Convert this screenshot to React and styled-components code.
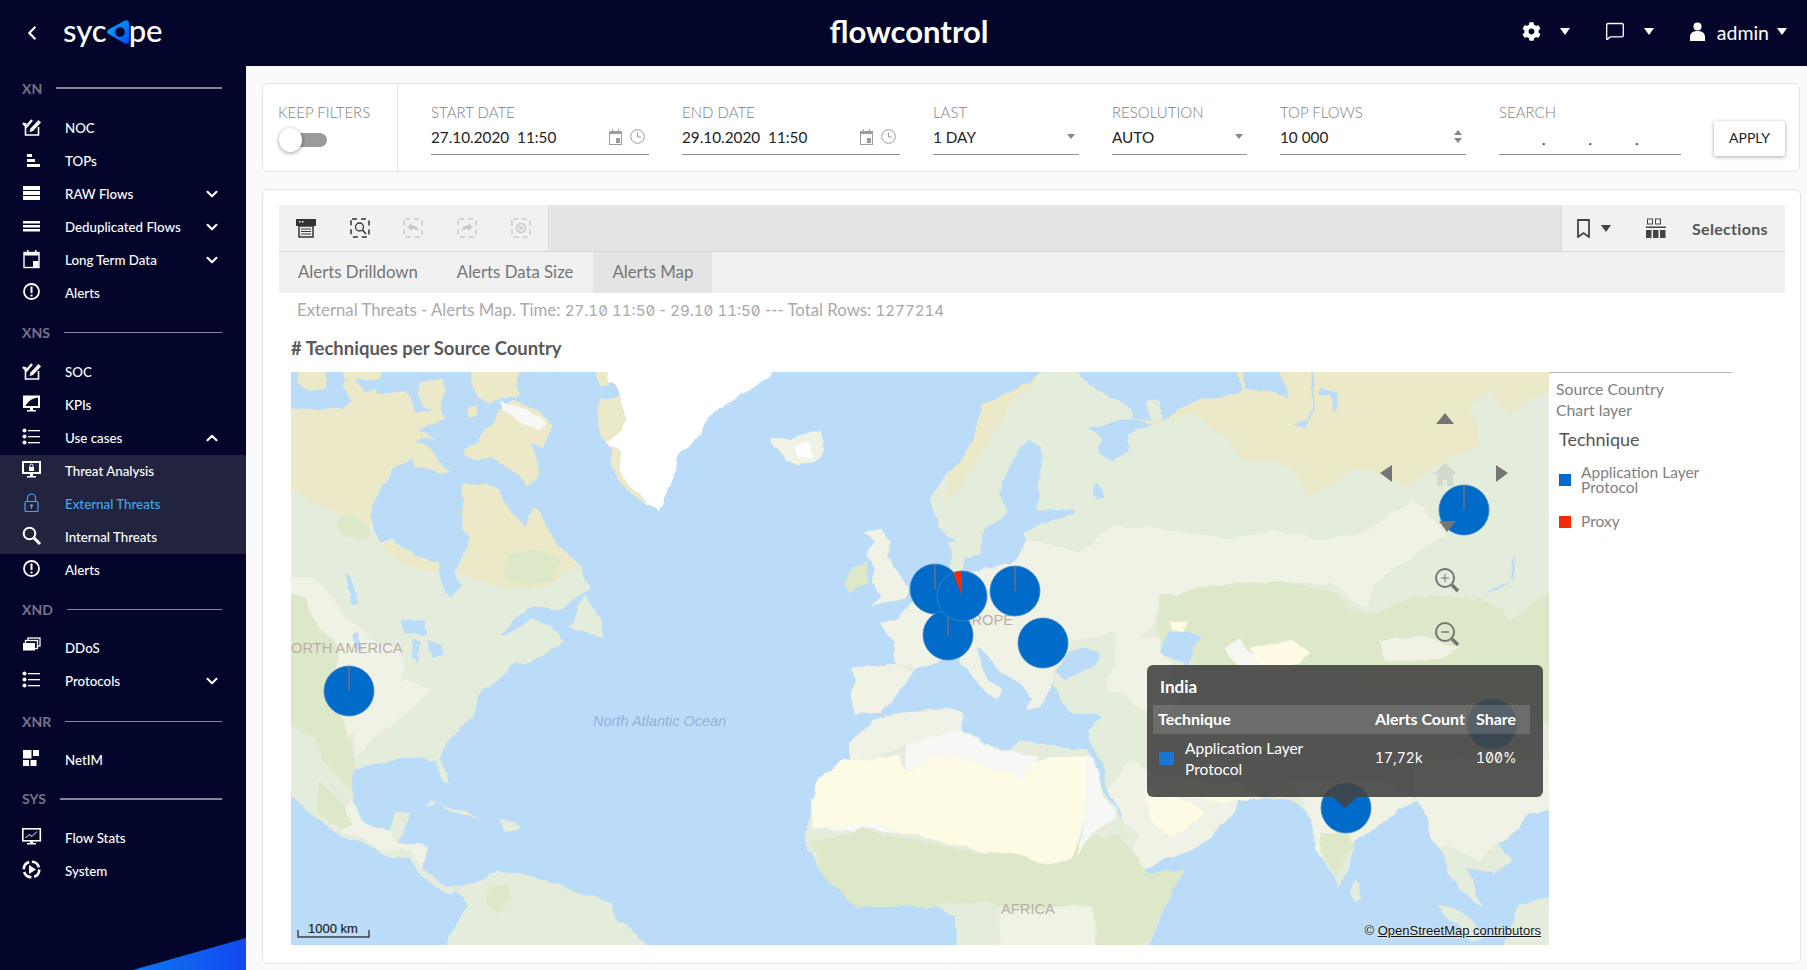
import React from 'react';
import styled, { createGlobalStyle } from 'styled-components';
import { FaCog } from 'react-icons/fa';
import { MessageSquare, ChevronDown, ChevronUp, ChevronLeft } from 'lucide-react';

const GlobalStyle = createGlobalStyle`
  html, body { margin: 0; padding: 0; background: #fafafa; }
  * { box-sizing: border-box; }
  body { font-family: Lato, "Open Sans", sans-serif; }
`;

const navy = '#03062a';

const icons = {
  noc: (
    <>
      <path d="M3.5 6v12h13V10" fill="none" stroke="currentColor" strokeWidth="1.6" />
      <path d="M1 6l3.5 3.5L10 3" fill="none" stroke="currentColor" strokeWidth="2.4" />
      <path d="M7.5 15l1-3.5 8-8.5 2.5 2.5-8 8.500z" fill="currentColor" />
    </>
  ),
  tops: (
    <>
      <rect x="5" y="4" width="5" height="3" fill="currentColor" />
      <rect x="5" y="9" width="8" height="3" fill="currentColor" />
      <rect x="5" y="14" width="13" height="3" fill="currentColor" />
    </>
  ),
  raw: (
    <>
      <rect x="1" y="3" width="17" height="4" fill="currentColor" />
      <rect x="1" y="8" width="17" height="4" fill="currentColor" />
      <rect x="1" y="13" width="17" height="4" fill="currentColor" />
    </>
  ),
  dedup: (
    <>
      <rect x="1" y="5" width="17" height="2.500" fill="currentColor" />
      <rect x="1" y="9" width="17" height="2.500" fill="currentColor" />
      <rect x="1" y="13" width="17" height="2.500" fill="currentColor" />
    </>
  ),
  calendar: (
    <>
      <rect x="2" y="3.500" width="15" height="15" fill="none" stroke="currentColor" strokeWidth="1.4" />
      <rect x="2" y="3.500" width="15" height="3" fill="currentColor" />
      <rect x="5" y="1" width="1.500" height="3" fill="currentColor" />
      <rect x="13" y="1" width="1.500" height="3" fill="currentColor" />
      <rect x="11" y="12" width="5.500" height="6" fill="currentColor" />
    </>
  ),
  alert: (
    <>
      <circle cx="9.500" cy="9.500" r="7.500" fill="none" stroke="currentColor" strokeWidth="1.800" />
      <rect x="8.500" y="4.500" width="2" height="6.500" fill="currentColor" />
      <rect x="8.500" y="12.500" width="2" height="2" fill="currentColor" />
    </>
  ),
  kpi: (
    <>
      <rect x="1" y="1.500" width="17" height="12.500" fill="currentColor" />
      <path d="M3.500 12 C6 7 10 4.500 16 3.500 V12z" fill={navy} />
      <rect x="8" y="14" width="3" height="2" fill="currentColor" />
      <rect x="5" y="16" width="9" height="1.500" fill="currentColor" />
    </>
  ),
  list: (
    <>
      <circle cx="2.500" cy="3.500" r="2" fill="currentColor" />
      <circle cx="2.500" cy="9.500" r="2" fill="currentColor" />
      <circle cx="2.500" cy="15.500" r="2" fill="currentColor" />
      <rect x="6" y="3" width="12" height="1.300" fill="currentColor" />
      <rect x="6" y="9" width="12" height="1.300" fill="currentColor" />
      <rect x="6" y="15" width="12" height="1.300" fill="currentColor" />
    </>
  ),
  threat: (
    <>
      <rect x="0" y="1" width="19" height="13" fill="currentColor" />
      <rect x="2" y="3" width="15" height="9" fill="#22243f" />
      <rect x="7" y="7" width="5" height="4" fill="currentColor" />
      <path d="M8 7V5.500a1.500 1.500 0 0 1 3 0V7" fill="none" stroke="currentColor" />
      <rect x="8" y="14" width="3" height="2" fill="currentColor" />
      <rect x="5" y="16" width="9" height="1.500" fill="currentColor" />
    </>
  ),
  lock: (
    <>
      <rect x="3" y="8.500" width="13" height="10" rx="1" fill="none" stroke="currentColor" strokeWidth="1.200" />
      <path d="M5.500 8.500V5a4 4 0 0 1 8 0v3.500" fill="none" stroke="currentColor" strokeWidth="1.200" />
      <circle cx="9.500" cy="12.500" r="1.500" fill="currentColor" />
      <rect x="9" y="13" width="1" height="3" fill="currentColor" />
    </>
  ),
  search: (
    <>
      <circle cx="7.500" cy="7.500" r="5.800" fill="none" stroke="currentColor" strokeWidth="2" />
      <path d="M12 12l6 6" stroke="currentColor" strokeWidth="3" />
    </>
  ),
  ddos: (
    <>
      <rect x="6" y="1" width="12" height="8" fill={navy} stroke="currentColor" strokeWidth="1.300" />
      <rect x="3.500" y="3.500" width="12" height="8" fill={navy} stroke="currentColor" strokeWidth="1.300" />
      <rect x="1" y="6" width="12" height="7.500" fill="currentColor" />
    </>
  ),
  netim: (
    <>
      <rect x="1" y="1" width="8.500" height="8.500" fill="currentColor" />
      <rect x="11" y="1" width="6" height="6" fill="currentColor" />
      <rect x="1" y="11" width="6" height="6" fill="currentColor" />
      <rect x="8.500" y="11" width="6" height="6" fill="currentColor" />
    </>
  ),
  stats: (
    <>
      <rect x="0.800" y="1.800" width="17.500" height="12" fill="none" stroke="currentColor" strokeWidth="1.600" />
      <path d="M3.500 11l3.500-3.500 3 2 5-5" fill="none" stroke="currentColor" strokeWidth="1" />
      <rect x="8" y="14" width="3" height="2" fill="currentColor" />
      <rect x="5" y="16" width="9" height="1.500" fill="currentColor" />
    </>
  ),
  system: (
    <>
      <circle cx="9.500" cy="9.500" r="7.800" fill="none" stroke="currentColor" strokeWidth="2.600" strokeDasharray="9.500 2.800" />
      <path d="M7 5l7 4.500-7 4.500z" fill="currentColor" />
    </>
  ),
};

const sections = [
  {
    label: 'XN',
    thick: true,
    top: 0,
    bottom: 11.5,
    items: [
      { icon: 'noc', label: 'NOC' },
      { icon: 'tops', label: 'TOPs' },
      { icon: 'raw', label: 'RAW Flows', arrow: 'down' },
      { icon: 'dedup', label: 'Deduplicated Flows', arrow: 'down' },
      { icon: 'calendar', label: 'Long Term Data', arrow: 'down' },
      { icon: 'alert', label: 'Alerts' },
    ],
  },
  {
    label: 'XNS',
    top: 10.5,
    bottom: 11.5,
    items: [
      { icon: 'noc', label: 'SOC' },
      { icon: 'kpi', label: 'KPIs' },
      { icon: 'list', label: 'Use cases', arrow: 'up' },
      { icon: 'threat', label: 'Threat Analysis', sub: true },
      { icon: 'lock', label: 'External Threats', sub: true, active: true },
      { icon: 'search', label: 'Internal Threats', sub: true },
      { icon: 'alert', label: 'Alerts' },
    ],
  },
  {
    label: 'XND',
    top: 10.5,
    bottom: 10.5,
    items: [
      { icon: 'ddos', label: 'DDoS' },
      { icon: 'list', label: 'Protocols', arrow: 'down' },
    ],
  },
  { label: 'XNR', top: 11.5, bottom: 10.5, items: [{ icon: 'netim', label: 'NetIM' }] },
  {
    label: 'SYS',
    thick: true,
    top: 10,
    bottom: 11,
    items: [
      { icon: 'stats', label: 'Flow Stats' },
      { icon: 'system', label: 'System' },
    ],
  },
];

// map shapes are in page pixels, the svg viewBox starts at the map's corner
// edge points run past the map so the rough coast filter leaves no gaps there
const ocean = '#bbdcf8';
const pale = '#f1f2e6';
const light = '#e4ecdc';
const green = '#dde8c8';
const cream = '#ece9c8';
const sand = '#fdfbe4';

const shapes = [
  // north america
  [light, '280,407 317,408 343,410 362,392 385,392 407,393 413,413 443,410 445,420 420,428 430,440 417,437 412,460 395,467 380,483 370,507 370,520 380,540 393,540 413,557 437,562 440,573 452,597 460,583 455,570 470,550 470,537 460,527 465,503 462,485 487,483 500,493 512,513 523,528 537,507 557,547 580,567 588,583 588,593 577,597 563,607 533,607 513,620 503,633 510,633 533,618 547,625 565,642 540,657 513,663 499,680 480,692 472,717 447,743 436,757 445,773 451,788 443,782 433,758 406,755 380,760 355,770 351,793 362,823 390,830 395,814 412,811 403,833 398,842 428,847 423,867 445,883 464,887 445,892 420,873 411,857 390,857 351,840 318,820 280,790'],
  [cream, '280,407 317,408 343,410 362,392 385,392 407,393 413,413 443,410 445,420 420,428 430,440 417,437 412,460 395,467 380,483 370,507 373,530 360,520 337,513 313,500 280,483'],
  [cream, '462,485 487,483 500,493 512,513 523,528 537,507 557,547 575,565 555,580 540,590 520,585 493,587 470,578 457,570 470,550 470,537 460,527 465,503'],
  [green, '340,515 362,522 372,535 362,542 345,535 335,522'],
  [cream, '383,543 393,540 413,557 437,562 438,570 420,570 398,560'],
  [green, '510,555 530,548 560,560 555,578 530,585 505,578'],
  [pale, '280,580 310,578 330,595 350,620 375,640 400,650 405,665 395,700 372,720 345,740 330,700 320,650 300,610 280,600'],
  [green, '280,595 305,595 318,625 340,650 335,700 352,740 355,770 351,793 330,770 315,740 280,720'],
  [pale, '375,690 405,680 430,690 395,725 370,740 355,760 355,735'],
  [pale, '352,800 362,823 390,830 398,842 428,847 423,867 410,850 380,850 350,835 330,825'],
  [green, '318,780 340,800 352,825 340,830 318,815'],
  [light, '568,627 583,597 600,617 605,637 590,633 573,628'],
  // arctic islands
  [cream, '462,450 480,443 485,430 497,413 513,400 540,412 555,427 543,448 530,442 540,470 537,480 528,485 513,470 497,460 480,458 463,458'],
  ['#f7f7f5', '500,403 525,408 540,418 548,426 538,430 520,420 503,412'],
  [cream, '473,362 520,362 518,395 505,400 490,405 478,395 470,385'],
  [cream, '343,385 352,378 365,392 378,385 377,400 362,408 350,400'],
  [cream, '420,382 440,378 445,392 443,410 425,408 418,395'],
  [cream, '300,362 330,362 328,388 310,394 298,385'],
  [cream, '340,362 385,362 382,378 345,380'],
  [cream, '413,440 425,445 440,460 450,470 438,472 425,468 415,470 412,460'],
  [cream, '467,407 478,404 480,415 470,418'],
  // south america
  [light, '464,887 472,883 499,868 538,877 571,890 609,903 620,923 636,937 653,955 447,955 450,937 469,907 455,890'],
  [green, '490,885 510,885 510,900 495,915 488,905'],
  // caribbean
  [light, '425,805 440,802 460,815 480,820 465,812 448,805 430,800'],
  [light, '498,820 515,822 520,830 505,832'],
  // greenland
  ['#ffffff', '593,362 600,385 615,382 620,398 600,410 598,425 605,440 612,450 612,465 620,480 630,495 645,505 655,510 658,512 665,505 668,490 675,470 678,455 688,442 714,412 770,377 775,362'],
  [cream, '600,398 620,398 623,430 610,438 604,440 598,425'],
  [cream, '610,445 620,452 620,470 632,490 648,505 640,503 625,490 612,465'],
  [cream, '593,362 605,362 610,385 600,385'],
  // iceland
  [pale, '770,436 775,436 790,441 805,434 820,432 823,450 813,459 800,466 787,463 780,450 772,445'],
  ['#ffffff', '795,447 808,443 812,455 798,458'],
  // british isles
  [pale, '864,530 882,527 890,540 887,557 897,570 907,587 905,600 887,603 872,608 880,597 872,583 877,570 867,557 874,543'],
  [green, '849,570 867,562 869,583 849,595 845,583'],
  // eurasia
  [light, '938,530 930,500 948,473 976,440 979,407 1010,390 1035,378 1076,362 1080,380 1103,390 1130,410 1133,422 1087,425 1103,437 1100,453 1113,463 1125,450 1130,437 1150,423 1147,402 1160,403 1160,420 1180,408 1203,398 1230,395 1243,392 1240,380 1228,362 1559,362 1559,807 1530,813 1518,830 1500,843 1513,863 1493,877 1467,867 1483,907 1463,890 1453,880 1437,847 1423,813 1417,800 1397,813 1373,830 1353,840 1350,867 1337,888 1320,857 1310,817 1290,800 1260,798 1237,803 1213,840 1173,857 1143,870 1130,850 1119,812 1100,765 1092,750 1086,730 1103,713 1070,715 1059,703 1053,683 1048,690 1040,705 1026,710 1031,697 1005,672 990,660 975,645 982,667 1000,690 995,700 985,690 962,665 960,653 947,657 917,667 912,672 900,690 895,705 880,712 865,712 855,715 852,695 855,680 850,668 895,663 893,643 880,623 900,617 910,607 917,593 937,573 950,570 947,540 963,540 963,573 990,570 1013,560 1027,540 1027,530 1040,525 1072,515 1072,508 1035,510 1040,480 1044,445 1030,440 1020,448 1006,470 1000,495 1010,510 1000,522 985,530 978,555 965,555 955,540'],
  [cream, '948,473 976,440 979,407 1010,390 1035,378 1000,420 985,450 962,480 945,500'],
  [pale, '880,623 900,617 910,607 917,593 937,573 950,570 963,573 990,570 1013,560 1027,540 1080,553 1113,527 1180,530 1223,540 1273,530 1313,540 1363,530 1413,503 1447,530 1413,557 1373,583 1367,610 1327,583 1280,583 1213,587 1157,597 1153,623 1130,657 1113,633 1080,637 1060,650 1053,683 1048,690 1040,705 1026,710 1031,697 1005,672 990,660 975,645 982,667 1000,690 995,700 985,690 962,665 960,653 947,657 917,667 895,663 893,643'],
  [pale, '852,695 855,680 850,668 895,663 912,672 900,690 895,705 880,712 865,712 855,715'],
  [cream, '1133,422 1150,423 1160,420 1180,408 1203,398 1230,395 1243,392 1240,380 1228,362 1559,362 1559,380 1513,413 1487,390 1470,410 1483,447 1447,457 1408,487 1373,470 1353,467 1327,487 1307,497 1293,470 1240,457 1227,437 1193,413'],
  [green, '1157,597 1213,587 1263,580 1327,590 1367,617 1413,597 1480,597 1513,620 1559,583 1559,730 1490,700 1400,690 1330,680 1250,680 1190,660 1157,640'],
  [pale, '1120,640 1157,640 1170,665 1180,700 1160,720 1125,700 1105,690'],
  [sand, '1170,622 1188,620 1184,637 1174,637'],
  ['#f7f7f2', '1225,650 1240,640 1250,655 1280,660 1240,670'],
  [sand, '1250,650 1290,640 1310,655 1300,665 1260,665'],
  [pale, '1380,640 1420,635 1460,645 1440,660 1385,660'],
  [pale, '1130,760 1180,790 1237,803 1213,840 1173,857 1143,870 1130,850 1110,790'],
  [sand, '1145,790 1190,800 1205,815 1170,835 1150,825'],
  [sand, '1160,775 1240,785 1260,798 1237,803 1180,795'],
  [pale, '1290,780 1380,780 1417,800 1373,830 1353,840 1340,860 1320,857 1310,817'],
  [green, '1320,830 1350,830 1352,845 1335,880 1322,855'],
  [pale, '1410,760 1559,760 1559,807 1530,813 1518,830 1500,843 1480,860 1460,850 1437,847 1423,813 1417,800'],
  [light, '1357,880 1363,885 1364,897 1357,900 1352,892'],
  // se asia islands
  [light, '1437,903 1450,905 1470,920 1483,938 1475,940 1455,925'],
  [light, '1520,905 1559,895 1559,955 1500,955 1510,925'],
  // africa
  [light, '850,757 850,743 870,718 911,712 960,710 963,730 1010,753 1020,740 1070,750 1086,750 1092,760 1119,820 1140,833 1130,857 1147,873 1187,870 1173,890 1150,943 1150,955 955,955 955,913 933,907 856,908 823,873 807,850 807,810 820,780 845,757'],
  [green, '808,840 860,830 960,850 1020,855 1060,860 1085,840 1120,835 1147,873 1187,870 1173,890 1150,940 1135,955 1000,955 1005,905 960,900 933,907 856,908 823,873'],
  [pale, '1000,910 1090,905 1100,955 1000,955'],
  [sand, '820,780 845,757 899,755 905,775 938,755 1026,760 1086,758 1086,816 1070,860 1048,863 1021,856 993,853 899,832 812,827 807,810'],
  ['#f7f7f5', '812,827 899,832 993,853 915,835 880,825 840,825'],
  ['#f7f7f5', '905,745 950,725 1000,750 1040,755 1020,780 985,765 938,755 905,775'],
  ['#f7f7f5', '1086,758 1092,760 1115,820 1090,835 1075,860 1086,816'],
  [pale, '871,718 911,712 960,710 963,730 905,745 875,755 850,757 850,743'],
];

const waters = [
  // inland and coastal seas cut into the land
  '1057,670 1070,653 1087,647 1100,653 1093,667 1067,680',
  '1167,633 1180,630 1203,637 1195,653 1190,667 1172,660 1160,650',
  '1243,362 1277,362 1288,398 1270,392 1245,390',
  '1313,362 1315,397 1312,413 1303,430 1292,428 1307,420 1313,400 1310,362',
  '1320,390 1337,393 1340,412 1336,412 1333,396 1320,395',
  '1518,557 1513,577 1497,592 1487,595 1510,580 1515,558',
  '1093,482 1098,487 1104,498 1098,498 1092,490',
  '347,573 353,575 360,603 355,605 350,590',
  '400,620 425,622 425,635 405,633',
  '412,640 420,640 418,665 412,660',
  '425,640 440,645 445,655 432,658',
  '350,635 358,632 362,650 355,650',
  '1064,748 1090,745 1100,760 1086,748',
];

const pies = [
  { cx: 349, cy: 691 },
  { cx: 935, cy: 589 },
  { cx: 948, cy: 635 },
  { cx: 962, cy: 596, wedge: true },
  { cx: 1015, cy: 591 },
  { cx: 1043, cy: 643, plain: true },
  { cx: 1464, cy: 510 },
  { cx: 1346, cy: 808, plain: true },
  { cx: 1492, cy: 724, plain: true },
];

const Pie = ({ cx, cy, wedge, plain }) => (
  <g>
    <circle cx={cx} cy={cy} r="25" fill="#006bc8" stroke="#3f86c6" strokeWidth="0.8" />
    {wedge && <polygon points={`${cx},${cy} ${cx - 9},${cy - 23} ${cx},${cy - 25}`} fill="#f52a0a" />}
    {!wedge && !plain && <line x1={cx} y1={cy} x2={cx} y2={cy - 25} stroke="#8b6f74" strokeWidth="1.200" />}
  </g>
);

const WorldMap = () => (
  <MapSvg viewBox="291 372 1258 573" width="1258" height="573">
    <defs>
      <filter id="rough" filterUnits="userSpaceOnUse" x="270" y="350" width="1300" height="620">
        <feTurbulence type="fractalNoise" baseFrequency="0.035" numOctaves="4" seed="7" result="noise" />
        <feDisplacementMap in="SourceGraphic" in2="noise" scale="11" xChannelSelector="R" yChannelSelector="G" />
        <feGaussianBlur stdDeviation="0.7" />
      </filter>
    </defs>
    <rect x="291" y="372" width="1258" height="573" fill={ocean} />
    <g filter="url(#rough)">
      {shapes.map(([fill, points], i) => (
        <polygon key={i} fill={fill} points={points} />
      ))}
      {waters.map((points, i) => (
        <polygon key={i} fill={ocean} points={points} />
      ))}
    </g>
    <MapLabel x="291" y="653">ORTH AMERICA</MapLabel>
    <MapLabel x="951" y="625">EUROPE</MapLabel>
    <MapLabel x="1001" y="914">AFRICA</MapLabel>
    <OceanLabel x="593" y="726">North Atlantic Ocean</OceanLabel>
    <path d="M298 930v7h71v-7" fill="none" stroke="#444" strokeWidth="1.500" />
    <ScaleLabel x="308" y="933">1000 km</ScaleLabel>
    {pies.map((p) => (
      <Pie key={`${p.cx}-${p.cy}`} {...p} />
    ))}
    <g fill="#757575">
      <polygon points="1436,424 1445,413 1454,424" />
      <polygon points="1392,465 1392,482 1380,473" />
      <polygon points="1496,465 1496,482 1508,473" />
      <polygon points="1439,521 1456,521 1447,532" />
    </g>
    <g opacity="0.14" fill="#757575">
      <polygon points="1433,474 1445,463 1457,474" />
      <path d="M1437 474h16v12h-16zM1443 480v6h4v-6z" fillRule="evenodd" />
    </g>
    <g fill="none" stroke="#757575" strokeWidth="2">
      <circle cx="1445" cy="578" r="9" />
      <path d="M1452 585l6 6" strokeWidth="3.500" />
      <path d="M1441 578h8M1445 574v8" strokeWidth="1" />
      <circle cx="1445" cy="632" r="9" />
      <path d="M1452 639l6 6" strokeWidth="3.500" />
      <path d="M1441 632h8" strokeWidth="1.500" />
    </g>
  </MapSvg>
);

const Caret = styled.span`
  display: inline-block;
  width: 0;
  height: 0;
  border-left: ${(p) => p.$size || 5}px solid transparent;
  border-right: ${(p) => p.$size || 5}px solid transparent;
  border-top: ${(p) => (p.$size || 5) * 1.400}px solid ${(p) => p.$color || '#fff'};
`;

const Page = styled.div`
  width: 1807px;
  height: 970px;
  display: flex;
  flex-direction: column;
  overflow: hidden;
`;

const TopBar = styled.header`
  height: 66px;
  flex: none;
  background: ${navy};
  color: #fff;
  display: grid;
  grid-template-columns: 1fr auto 1fr;
  align-items: center;
`;

const LogoArea = styled.div`
  display: flex;
  align-items: center;
  padding-left: 21px;
  gap: 20px;
`;

const Logo = styled.div`
  display: flex;
  align-items: center;
  font-size: 31px;
  font-weight: 500;
  line-height: 1;
  margin-top: -6px;
`;

const AppTitle = styled.div`
  font-size: 31px;
  font-weight: 700;
  margin: -4px 0 0 11px;
`;

const TopTools = styled.div`
  display: flex;
  justify-content: flex-end;
  align-items: center;
  padding: 0 20px 4px 0;
  gap: 35px;
`;

const TopTool = styled.div`
  display: flex;
  align-items: center;
  gap: ${(p) => p.$gap || 19}px;
`;

const AdminName = styled.span`
  font-size: 19.500px;
  margin-right: -3px;
  margin-top: 3px;
`;

const Body = styled.div`
  flex: 1;
  display: flex;
  min-height: 0;
`;

const Sidebar = styled.nav`
  width: 246px;
  flex: none;
  background: ${navy};
  padding-top: 10px;
  position: relative;
  overflow: hidden;
`;

const Corner = styled.svg`
  position: absolute;
  left: 0;
  bottom: 0;
`;

const SectionHead = styled.div`
  height: 24px;
  display: flex;
  align-items: center;
  gap: 14px;
  padding: 0 24px 0 22px;
  margin: ${(p) => p.$top}px 0 ${(p) => p.$bottom}px;
  font-size: 14px;
  font-weight: 700;
  color: #74748a;

  &::after {
    content: '';
    flex: 1;
    height: ${(p) => (p.$thick ? 2 : 1)}px;
    background: #85859a;
  }
`;

const NavRow = styled.div`
  height: 33px;
  display: flex;
  align-items: center;
  padding: 0 25px 0 22px;
  font-size: 13.300px;
  font-weight: 500;
  background: ${(p) => (p.$sub ? '#22243f' : 'transparent')};
  color: ${(p) => (p.$active ? '#3fa7ea' : '#fff')};
`;

const NavIcon = styled.svg`
  width: 20px;
  height: 20px;
  margin: -3px 23px 0 0;
  flex: none;
`;

const NavLabel = styled.span`
  flex: 1;
`;

const Main = styled.main`
  flex: 1;
  min-width: 0;
  padding: 17px 6px 6px 16px;
  display: flex;
  flex-direction: column;
  gap: 17px;
`;

const FilterCard = styled.section`
  height: 89px;
  flex: none;
  background: #fff;
  border: 1px solid #e1e5e8;
  border-radius: 6px;
  display: flex;
  margin-right: 1px;
`;

const KeepCol = styled.div`
  width: 135px;
  flex: none;
  border-right: 1px solid #e6e6e6;
  padding: 18px 0 0 15px;
`;

const Fields = styled.div`
  display: flex;
  gap: 33px;
  padding-left: 33px;
`;

const FieldLabel = styled.div`
  height: 20px;
  line-height: 20px;
  font-size: 15px;
  font-weight: 300;
  color: #808080;
  white-space: nowrap;
`;

const Field = styled.div`
  width: ${(p) => p.$w}px;
  padding-top: 18px;
`;

const FieldValue = styled.div`
  height: 33px;
  padding-bottom: 3px;
  display: flex;
  align-items: center;
  justify-content: space-between;
  border-bottom: 1.500px solid #8f8f8f;
  font-size: 15.300px;
  color: #222;
  white-space: pre;
`;

const FieldIcons = styled.span`
  display: flex;
  gap: 8px;
  margin-right: 4px;
  color: #9c9c9c;
`;

const IpDots = styled.span`
  display: flex;
  gap: 43px;
  padding: 4px 0 0 43px;
  font-size: 15px;
`;

const Spinner = styled.span`
  display: flex;
  flex-direction: column;
  gap: 3px;
  margin-right: 4px;
`;

const UpCaret = styled(Caret)`
  transform: rotate(180deg);
`;

const ApplyButton = styled.button`
  align-self: flex-end;
  margin-bottom: 15px;
  width: 71px;
  height: 35px;
  padding-bottom: 3px;
  border: 0;
  border-radius: 2px;
  background: #fff;
  box-shadow: 0 1px 4px rgba(0, 0, 0, 0.35);
  font: 400 14px Lato, sans-serif;
  color: #222;
`;

const Toggle = styled.div`
  position: relative;
  width: 43px;
  height: 14px;
  margin: 11px 0 0 6px;
  border-radius: 7px;
  background: #9b9b9b;

  &::before {
    content: '';
    position: absolute;
    left: -5px;
    top: -5px;
    width: 23px;
    height: 24px;
    border-radius: 50%;
    background: #fff;
    box-shadow: 0 1px 4px rgba(0, 0, 0, 0.4);
  }
`;

const ChartCard = styled.section`
  flex: 1;
  min-height: 0;
  background: #fff;
  border: 1px solid #e1e5e8;
  border-radius: 6px;
  padding: 15px 15px 0 16px;
`;

const Toolbar = styled.div`
  height: 47px;
  display: flex;
  background: #e4e4e4;
  border-bottom: 1px solid #d6d6d6;
`;

const ToolGroup = styled.div`
  width: 270px;
  display: flex;
  align-items: center;
  background: #f1f1f1;
  border-right: 1px solid #dcdcdc;
`;

const ToolButton = styled.div`
  width: 53.700px;
  display: flex;
  justify-content: center;
  color: ${(p) => (p.$off ? '#c9c9c9' : '#333')};
`;

const ToolSpacer = styled.div`
  flex: 1;
`;

const RightTools = styled.div`
  width: 224px;
  display: flex;
  align-items: center;
  padding-left: 15px;
  background: #f1f1f1;
  border-left: 1px solid #dcdcdc;
  color: #444;
`;

const ToolCaret = styled(Caret)`
  margin: 0 35px 0 11px;
`;

const SelectionsText = styled.span`
  margin-left: 26px;
  font-size: 16px;
  letter-spacing: 0.3px;
  font-weight: 700;
  color: #555;
`;

const Tabs = styled.div`
  height: 41px;
  display: flex;
  background: #f1f1f1;
`;

const Tab = styled.div`
  padding: 0 19px 2px;
  margin-right: 1px;
  display: flex;
  align-items: center;
  font-size: 16.800px;
  color: #757575;
  background: ${(p) => (p.$active ? '#e4e4e4' : 'transparent')};
`;

const StatusLine = styled.div`
  height: 34px;
  line-height: 34px;
  padding-left: 18px;
  font-size: 16.800px;
  color: #a9a9a9;
  white-space: nowrap;
`;

const Num = styled.span`
  font-family: Inter, sans-serif;
  font-feature-settings: 'zero';
  font-variant-numeric: slashed-zero tabular-nums;
  font-size: 0.9em;
`;

const ChartTitle = styled.h2`
  margin: 0 0 3px;
  height: 42px;
  line-height: 42px;
  padding-left: 12px;
  font-size: 18.500px;
  font-weight: 700;
  color: #595959;
`;

const ChartRow = styled.div`
  display: flex;
  margin-left: 12px;
`;

const MapWrap = styled.div`
  position: relative;
  width: 1258px;
  height: 573px;
  flex: none;
`;

const MapSvg = styled.svg`
  display: block;
`;

const MapLabel = styled.text`
  font: 14.700px 'Liberation Sans', sans-serif;
  fill: #b8b0a6;
`;

const OceanLabel = styled.text`
  font: italic 14.500px 'Liberation Sans', sans-serif;
  fill: #9aaedb;
`;

const ScaleLabel = styled.text`
  font: 13px 'Liberation Sans', sans-serif;
  fill: #222;
  stroke: #222;
  stroke-width: 0.2px;
`;

const Attribution = styled.span`
  position: absolute;
  right: 8px;
  bottom: 7px;
  font: 13px 'Liberation Sans', sans-serif;
  color: #111;
  text-shadow: 0 0 2px #fff;

  u {
    text-decoration: underline;
  }
`;

const Tip = styled.div`
  position: absolute;
  left: 856px;
  top: 293px;
  width: 396px;
  height: 132px;
  padding: 0 13px 0 6px;
  border-radius: 6px;
  background: rgba(65, 65, 65, 0.89);
  color: #fff;

  &::after {
    content: '';
    position: absolute;
    left: 186px;
    top: 100%;
    border-left: 12px solid transparent;
    border-right: 12px solid transparent;
    border-top: 11px solid rgba(65, 65, 65, 0.89);
  }
`;

const TipTitle = styled.div`
  height: 40px;
  line-height: 44px;
  padding-left: 7px;
  font-size: 17px;
  font-weight: 700;
`;

const TipHead = styled.div`
  height: 29px;
  padding: 0 0 2px 5px;
  display: grid;
  grid-template-columns: 217px 101px auto;
  align-items: center;
  background: rgba(255, 255, 255, 0.15);
  font-size: 16px;
  font-weight: 700;
  white-space: nowrap;
`;

const TipRow = styled.div`
  display: grid;
  grid-template-columns: 216px 101px auto;
  align-items: center;
  padding: 4px 0 0 6px;
  font-size: 15.500px;
  line-height: 20.500px;
`;

const TipName = styled.div`
  display: flex;
  align-items: center;
  gap: 11px;
`;

const Swatch = styled.span`
  width: ${(p) => p.$w || 12}px;
  height: ${(p) => p.$h || 12}px;
  flex: none;
  background: ${(p) => p.$color};
`;

const Legend = styled.aside`
  width: 183px;
  flex: none;
  border-top: 1px solid #b5b5b5;
  padding: 6px 0 0 7px;
  color: #808080;
  font-size: 15.800px;
`;

const LegendLine = styled.div`
  line-height: 20.500px;
`;

const LegendHeading = styled.div`
  margin: 8px 0 15px 3px;
  font-size: 18px;
  line-height: 22px;
  color: #555;
`;

const LegendItem = styled.div`
  display: flex;
  align-items: center;
  gap: 10px;
  padding-left: 3px;
  margin-bottom: ${(p) => p.$mb || 0}px;
  line-height: 15px;
  font-size: 15.500px;
`;

const CalendarGlyph = () => (
  <svg width="13" height="16" viewBox="0 0 13 16">
    <rect x="0.500" y="2.500" width="12" height="13" fill="none" stroke="currentColor" />
    <rect x="0" y="2" width="13" height="3" fill="currentColor" />
    <rect x="3" y="0" width="1" height="3" fill="currentColor" />
    <rect x="9" y="0" width="1" height="3" fill="currentColor" />
    <rect x="7" y="9" width="4" height="5" fill="currentColor" />
  </svg>
);

const ClockGlyph = () => (
  <svg width="15" height="15" viewBox="0 0 15 15">
    <circle cx="7.500" cy="7.500" r="6.800" fill="none" stroke="currentColor" />
    <path d="M7.500 3.500v4.500h3.500" fill="none" stroke="currentColor" />
  </svg>
);

const DateIcons = () => (
  <FieldIcons>
    <CalendarGlyph />
    <ClockGlyph />
  </FieldIcons>
);

const UserGlyph = () => (
  <svg width="17" height="19" viewBox="0 0 17 19">
    <circle cx="8.500" cy="4.500" r="4" fill="#fff" />
    <path d="M1 19v-4c0-4 3-6 7.500-6s7.500 2 7.500 6v4z" fill="#fff" />
  </svg>
);

const MarkSvg = styled.svg`
  margin: 3px -1px 0 -1px;
`;

const SycopeMark = () => (
  <MarkSvg width="24" height="26" viewBox="0 0 24 26">
    <defs>
      <linearGradient id="mark" x1="0" y1="0" x2="1" y2="1">
        <stop offset="0" stopColor="#00b6ff" />
        <stop offset="1" stopColor="#0a48f5" />
      </linearGradient>
    </defs>
    <path d="M19 1.500c2-1 4 .5 4 2.500v18c0 2-2 3.500-4 2.500L2.500 15c-2-1-2-3 0-4.500z" fill="url(#mark)" />
    <circle cx="14" cy="13" r="4.800" fill={navy} />
  </MarkSvg>
);

const PrintGlyph = () => (
  <svg width="20" height="20" viewBox="0 0 20 20">
    <rect x="0" y="1" width="20" height="7" fill="currentColor" />
    <rect x="3" y="3" width="1.500" height="1.500" fill="#fff" />
    <rect x="6" y="3" width="1.500" height="1.500" fill="#fff" />
    <rect x="3" y="8" width="14" height="11" fill="#f1f1f1" stroke="currentColor" strokeWidth="1.500" />
    <path d="M5 11h10M5 13.500h10M5 16h10" stroke="currentColor" strokeWidth="1.200" />
  </svg>
);

const DashBox = ({ children }) => (
  <svg width="20" height="20" viewBox="0 0 20 20">
    <rect x="1" y="1" width="18" height="18" rx="1" fill="none" stroke="currentColor" strokeWidth="1.500" strokeDasharray="5 4" />
    {children}
  </svg>
);

const BookmarkGlyph = () => (
  <svg width="13" height="19" viewBox="0 0 13 19">
    <path d="M1 1h11v17l-5.500-4L1 18z" fill="none" stroke="currentColor" strokeWidth="1.800" />
  </svg>
);

const ColumnsGlyph = () => (
  <svg width="20" height="20" viewBox="0 0 20 20">
    <rect x="1.500" y="1" width="5" height="5" fill="none" stroke="currentColor" />
    <rect x="9.500" y="1" width="5" height="5" fill="none" stroke="currentColor" />
    <rect x="0" y="8.500" width="20" height="1.500" fill="currentColor" />
    <rect x="0" y="12" width="5.500" height="8" fill="currentColor" />
    <rect x="7" y="12" width="5.500" height="8" fill="currentColor" />
    <rect x="14" y="12" width="5.500" height="8" fill="currentColor" />
  </svg>
);

export default function App() {
  return (
    <Page>
      <GlobalStyle />
      <TopBar>
        <LogoArea>
          <ChevronLeft size={22} color="#fff" strokeWidth={2.500} />
          <Logo>
            syc
            <SycopeMark />
            pe
          </Logo>
        </LogoArea>
        <AppTitle>flowcontrol</AppTitle>
        <TopTools>
          <TopTool>
            <FaCog size={19} />
            <Caret />
          </TopTool>
          <TopTool>
            <MessageSquare size={20} strokeWidth={1.600} />
            <Caret />
          </TopTool>
          <TopTool $gap={11}>
            <UserGlyph />
            <AdminName>admin</AdminName>
            <Caret />
          </TopTool>
        </TopTools>
      </TopBar>
      <Body>
        <Sidebar>
          {sections.map((section) => (
            <div key={section.label}>
              <SectionHead $top={section.top} $bottom={section.bottom} $thick={section.thick}>
                {section.label}
              </SectionHead>
              {section.items.map((item) => (
                <NavRow key={item.label} $sub={item.sub} $active={item.active}>
                  <NavIcon viewBox="0 0 20 20">{icons[item.icon]}</NavIcon>
                  <NavLabel>{item.label}</NavLabel>
                  {item.arrow === 'down' && <ChevronDown size={18} strokeWidth={2.800} />}
                  {item.arrow === 'up' && <ChevronUp size={18} strokeWidth={2.800} />}
                </NavRow>
              ))}
            </div>
          ))}
          <Corner width="246" height="34" viewBox="0 0 246 34">
            <defs>
              <linearGradient id="corner" x1="0" y1="0" x2="1" y2="0">
                <stop offset="0" stopColor="#0a78f0" />
                <stop offset="1" stopColor="#1548f0" />
              </linearGradient>
            </defs>
            <polygon points="133,34 246,2 246,34" fill="url(#corner)" />
          </Corner>
        </Sidebar>
        <Main>
          <FilterCard>
            <KeepCol>
              <FieldLabel>KEEP FILTERS</FieldLabel>
              <Toggle />
            </KeepCol>
            <Fields>
              <Field $w={218}>
                <FieldLabel>START DATE</FieldLabel>
                <FieldValue>
                  27.10.2020  11:50
                  <DateIcons />
                </FieldValue>
              </Field>
              <Field $w={218}>
                <FieldLabel>END DATE</FieldLabel>
                <FieldValue>
                  29.10.2020  11:50
                  <DateIcons />
                </FieldValue>
              </Field>
              <Field $w={146}>
                <FieldLabel>LAST</FieldLabel>
                <FieldValue>
                  1 DAY
                  <FieldIcons>
                    <Caret $size={4} $color="#888" />
                  </FieldIcons>
                </FieldValue>
              </Field>
              <Field $w={135}>
                <FieldLabel>RESOLUTION</FieldLabel>
                <FieldValue>
                  AUTO
                  <FieldIcons>
                    <Caret $size={4} $color="#888" />
                  </FieldIcons>
                </FieldValue>
              </Field>
              <Field $w={186}>
                <FieldLabel>TOP FLOWS</FieldLabel>
                <FieldValue>
                  10 000
                  <Spinner>
                    <UpCaret $size={4} $color="#888" />
                    <Caret $size={4} $color="#888" />
                  </Spinner>
                </FieldValue>
              </Field>
              <Field $w={182}>
                <FieldLabel>SEARCH</FieldLabel>
                <FieldValue>
                  <IpDots>
                    <span>.</span>
                    <span>.</span>
                    <span>.</span>
                  </IpDots>
                </FieldValue>
              </Field>
              <ApplyButton>APPLY</ApplyButton>
            </Fields>
          </FilterCard>
          <ChartCard>
            <Toolbar>
              <ToolGroup>
                <ToolButton>
                  <PrintGlyph />
                </ToolButton>
                <ToolButton>
                  <DashBox>
                    <circle cx="9.500" cy="9" r="4" fill="none" stroke="currentColor" strokeWidth="1.300" />
                    <path d="M12.500 12l3.500 4" stroke="currentColor" strokeWidth="1.500" />
                  </DashBox>
                </ToolButton>
                <ToolButton $off>
                  <DashBox>
                    <path d="M4 9l5-4v2.500c4 0 6 2 6 6-1.500-2-3-2.500-6-2.500V13z" fill="currentColor" />
                  </DashBox>
                </ToolButton>
                <ToolButton $off>
                  <DashBox>
                    <path d="M16 9l-5-4v2.500c-4 0-6 2-6 6 1.500-2 3-2.500 6-2.500V13z" fill="currentColor" />
                  </DashBox>
                </ToolButton>
                <ToolButton $off>
                  <DashBox>
                    <circle cx="10" cy="10" r="4.500" fill="none" stroke="currentColor" strokeWidth="1.500" />
                    <path d="M8 8l4 4M12 8l-4 4" stroke="currentColor" strokeWidth="1.300" />
                  </DashBox>
                </ToolButton>
              </ToolGroup>
              <ToolSpacer />
              <RightTools>
                <BookmarkGlyph />
                <ToolCaret $color="#444" />
                <ColumnsGlyph />
                <SelectionsText>Selections</SelectionsText>
              </RightTools>
            </Toolbar>
            <Tabs>
              <Tab>Alerts Drilldown</Tab>
              <Tab>Alerts Data Size</Tab>
              <Tab $active>Alerts Map</Tab>
            </Tabs>
            <StatusLine>
              External Threats - Alerts Map. Time: <Num>27.10 11:50</Num> - <Num>29.10 11:50</Num> --- Total Rows: <Num>1277214</Num>
            </StatusLine>
            <ChartTitle># Techniques per Source Country</ChartTitle>
            <ChartRow>
              <MapWrap>
                <WorldMap />
                <Attribution>
                  © <u>OpenStreetMap contributors</u>
                </Attribution>
                <Tip>
                  <TipTitle>India</TipTitle>
                  <TipHead>
                    <span>Technique</span>
                    <span>Alerts Count</span>
                    <span>Share</span>
                  </TipHead>
                  <TipRow>
                    <TipName>
                      <Swatch $w={15} $h={13} $color="#1976d2" />
                      <span>
                        Application Layer
                        <br />
                        Protocol
                      </span>
                    </TipName>
                    <Num>17,72k</Num>
                    <Num>100%</Num>
                  </TipRow>
                </Tip>
              </MapWrap>
              <Legend>
                <LegendLine>Source Country</LegendLine>
                <LegendLine>Chart layer</LegendLine>
                <LegendHeading>Technique</LegendHeading>
                <LegendItem $mb={19}>
                  <Swatch $color="#006bc8" />
                  <span>
                    Application Layer
                    <br />
                    Protocol
                  </span>
                </LegendItem>
                <LegendItem>
                  <Swatch $color="#f52a0a" />
                  <span>Proxy</span>
                </LegendItem>
              </Legend>
            </ChartRow>
          </ChartCard>
        </Main>
      </Body>
    </Page>
  );
}
